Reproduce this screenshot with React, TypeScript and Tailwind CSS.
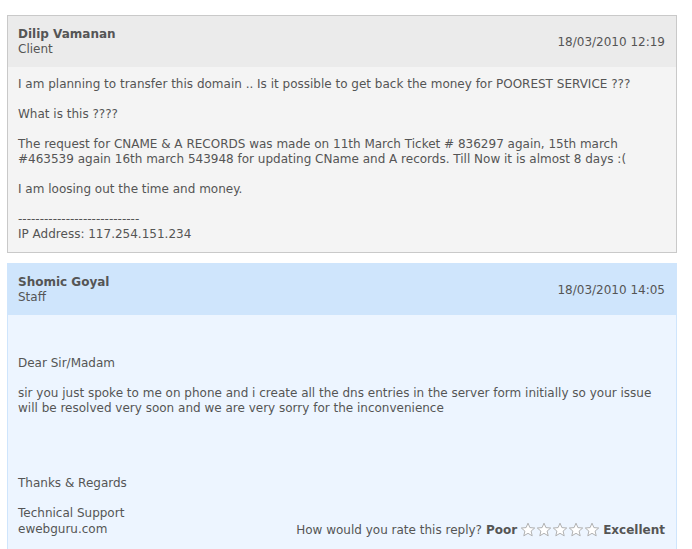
const Star = () => (
  <svg width="16" height="16" viewBox="0 0 16 16" className="block">
    <path
      d="M8 1.2 L9.9 5.6 L14.7 6 L11.1 9.1 L12.2 13.8 L8 11.3 L3.8 13.8 L4.9 9.1 L1.3 6 L6.1 5.6 Z"
      fill="#ffffff"
      stroke="#a8a8a8"
      strokeWidth="0.9"
      strokeLinejoin="round"
    />
  </svg>
);

export default function App() {
  return (
    <div
      className="bg-white text-[12px] leading-[15px] text-[#555] pt-[15px] pl-[7px] pr-[15px] pb-4"
      style={{ fontFamily: '"DejaVu Sans", sans-serif' }}
    >
      {/* client message */}
      <div className="border border-[#c9c9c9]">
        <div className="flex items-center justify-between bg-[#ebebeb] pl-[10px] pr-[11px] pt-[11px] pb-[10px]">
          <div>
            <div className="font-bold">Dilip Vamanan</div>
            <div>Client</div>
          </div>
          <div>18/03/2010 12:19</div>
        </div>
        <div className="bg-[#f4f4f4] px-[10px] pt-[10px] pb-[10px]">
          <p>I am planning to transfer this domain .. Is it possible to get back the money for POOREST SERVICE ???</p>
          <p className="mt-[15px]">What is this ????</p>
          <p className="mt-[15px]">
            The request for CNAME &amp; A RECORDS was made on 11th March Ticket # 836297 again, 15th march #463539 again 16th
            march 543948 for updating CName and A records. Till Now it is almost 8 days :(
          </p>
          <p className="mt-[15px]">I am loosing out the time and money.</p>
          <p className="mt-[15px]">----------------------------</p>
          <p>IP Address: 117.254.151.234</p>
        </div>
      </div>

      {/* staff reply */}
      <div className="mt-[10px] border border-[#cfe5fc]">
        <div className="flex items-center justify-between bg-[#cfe5fc] pl-[10px] pr-[11px] pt-[11px] pb-[10px]">
          <div>
            <div className="font-bold">Shomic Goyal</div>
            <div>Staff</div>
          </div>
          <div>18/03/2010 14:05</div>
        </div>
        <div className="bg-[#edf5ff] pl-[10px] pr-[11px] pt-[41px] pb-[20px]">
          <p>Dear Sir/Madam</p>
          <p className="mt-[15px]">
            sir you just spoke to me on phone and i create all the dns entries in the server form initially so your issue will
            be resolved very soon and we are very sorry for the inconvenience
          </p>
          <p className="mt-[60px]">Thanks &amp; Regards</p>
          <p className="mt-[15px]">Technical Support</p>
          <div className="flex items-end justify-between">
            <p>ewebguru.com</p>
            <div className="flex items-center translate-y-[1px]">
              <span>How would you rate this reply?</span>
              <span className="font-bold ml-[4px]">Poor</span>
              <div className="flex ml-[3px] mr-[3px]">
                <Star />
                <Star />
                <Star />
                <Star />
                <Star />
              </div>
              <span className="font-bold">Excellent</span>
            </div>
          </div>
        </div>
      </div>
    </div>
  );
}
